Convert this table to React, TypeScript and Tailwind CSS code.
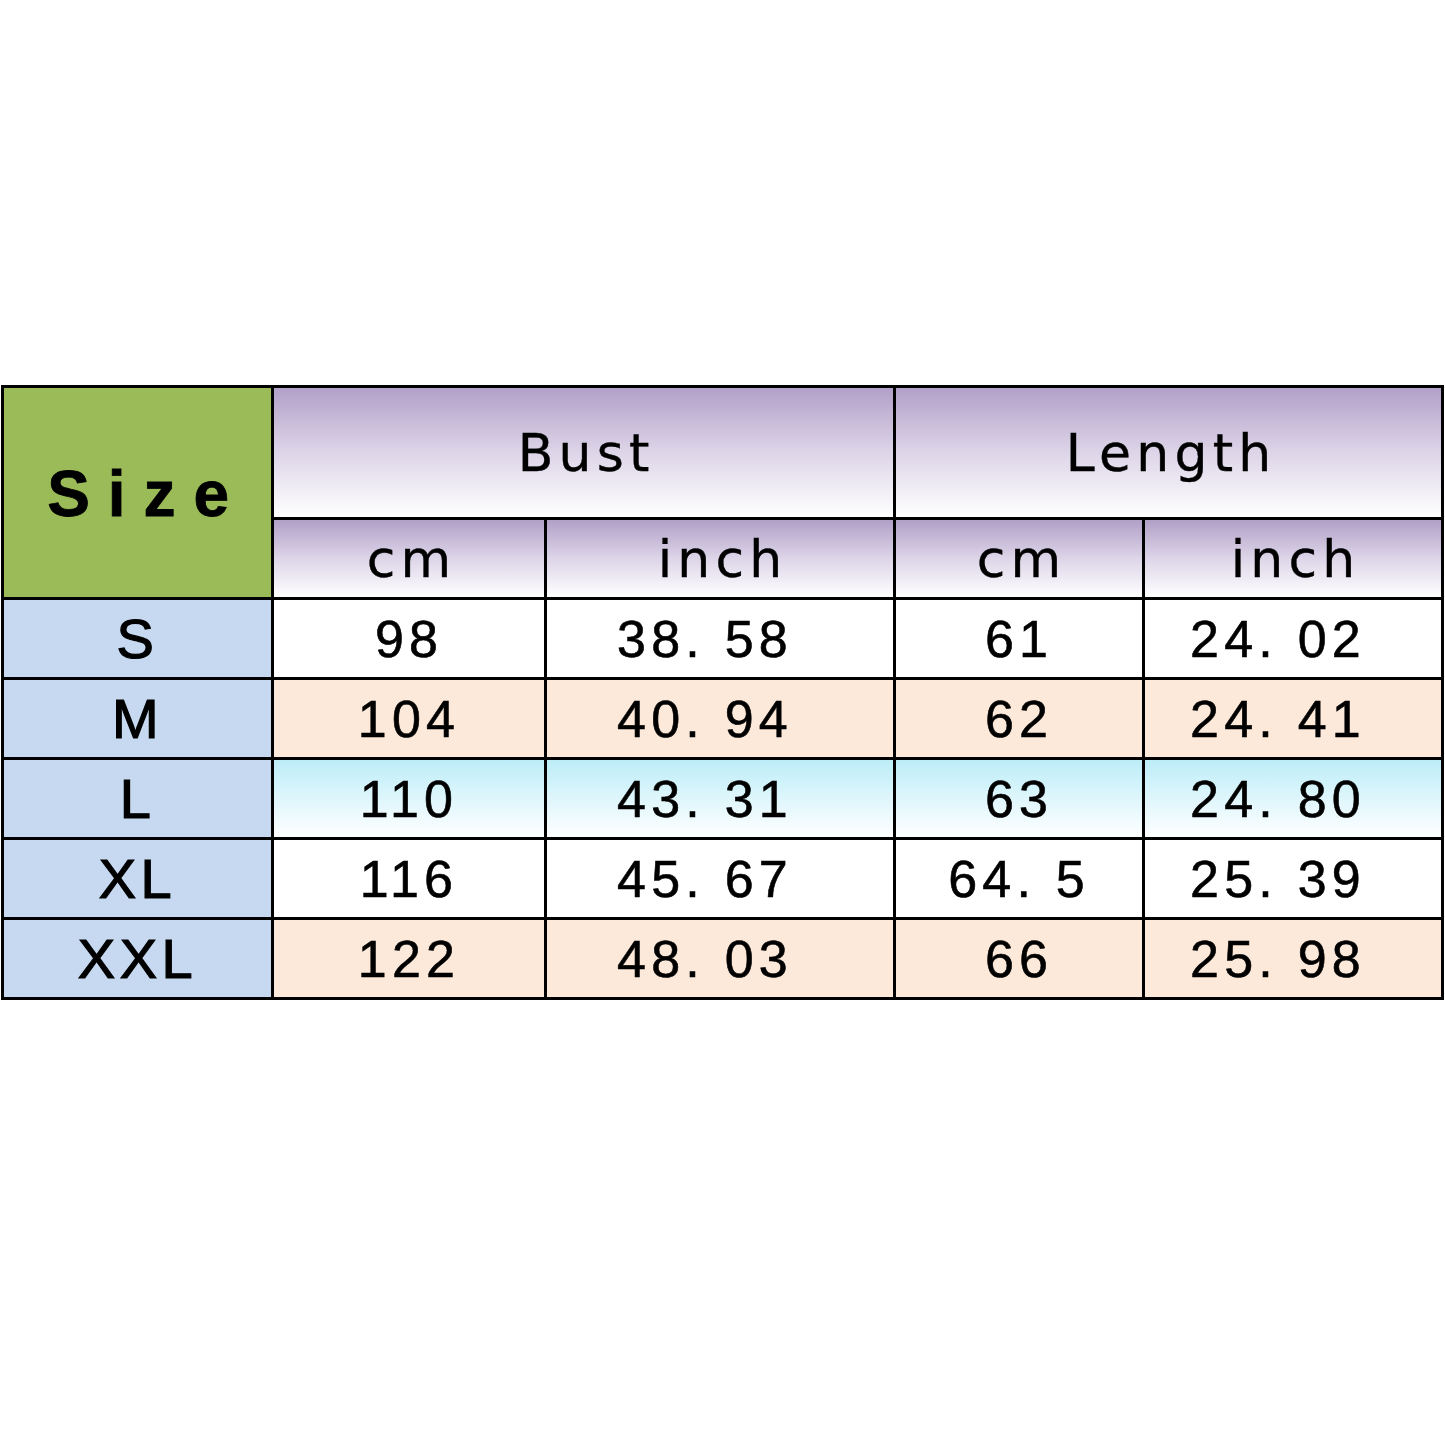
import React from 'react';

const rows = [
  { size: 'S', bg: 'bg-white', v: ['98', '38. 58', '61', '24. 02'] },
  { size: 'M', bg: 'bg-[#fce9da]', v: ['104', '40. 94', '62', '24. 41'] },
  { size: 'L', bg: 'bg-linear-to-b from-[#bcedf8] to-white', v: ['110', '43. 31', '63', '24. 80'] },
  { size: 'XL', bg: 'bg-white', v: ['116', '45. 67', '64. 5', '25. 39'] },
  { size: 'XXL', bg: 'bg-[#fce9da]', v: ['122', '48. 03', '66', '25. 98'] },
];

const head = "flex items-center justify-center bg-linear-to-b from-[#b2a0c8] via-[#ddd5e8] to-white text-black font-['DejaVu_Sans',sans-serif] text-[52px] tracking-[0.1em] pl-[0.1em] [-webkit-text-stroke:0.4px_black]";
const cell = "flex items-center justify-center text-black font-['Liberation_Sans',Arial,sans-serif] text-[52px] tracking-[0.1em] [-webkit-text-stroke:0.6px_black]";

export default function App() {
  return (
    <div className="w-[1445px] h-[1445px] bg-white pt-[385px] pl-[1px]">
      <div className="grid w-[1443px] grid-cols-[267px_270px_346px_246px_296px] grid-rows-[129px_77px_77px_77px_77px_77px_77px] gap-[3px] bg-black p-[3px]">
        <div className="row-span-2 flex items-center justify-center bg-[#9bbb59] font-['Liberation_Sans',Arial,sans-serif] text-[64px] font-bold tracking-[0.28em] text-black pl-[0.3em] pt-[2px] [-webkit-text-stroke:0.8px_black]">
          Size
        </div>
        <div className={`${head} col-span-2`}>Bust</div>
        <div className={`${head} col-span-2`}>Length</div>
        <div className={head}>cm</div>
        <div className={head}>inch</div>
        <div className={head}>cm</div>
        <div className={head}>inch</div>
        {rows.map((r) => (
          <React.Fragment key={r.size}>
            <div className={`${cell} bg-[#c6d9f0] text-[56px] tracking-[0.08em] [-webkit-text-stroke:1.2px_black]`}>{r.size}</div>
            {r.v.map((x, i) => (
              <div key={i} className={`${cell} ${r.bg} ${i % 2 === 1 ? 'pr-[30px]' : ''}`}>{x}</div>
            ))}
          </React.Fragment>
        ))}
      </div>
    </div>
  );
}
